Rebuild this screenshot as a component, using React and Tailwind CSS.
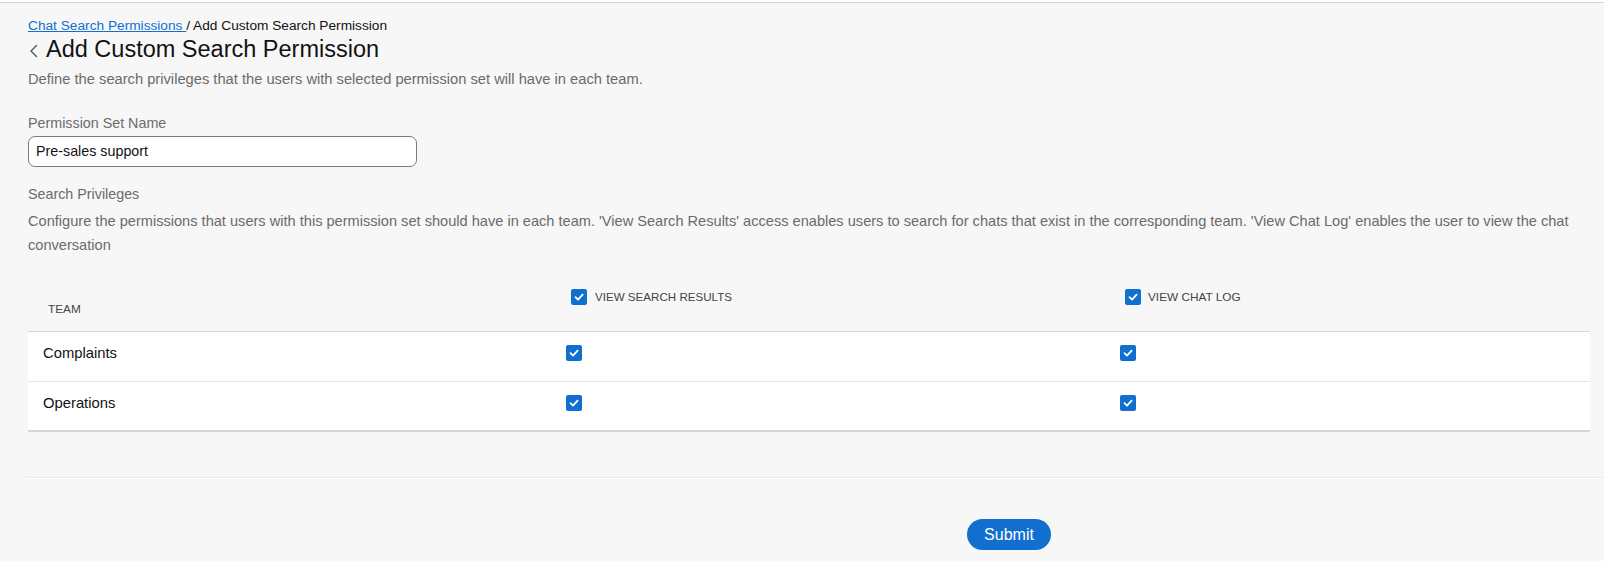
import React from "react";

function Check({ className = "" }) {
  return (
    <span className={`inline-flex h-[16px] w-[16px] shrink-0 items-center justify-center rounded-[2px] bg-[#1170cf] ${className}`}>
      <svg width="12" height="12" viewBox="0 0 12 12" fill="none">
        <path d="M2.5 6.2 L5 8.6 L9.6 3.6" stroke="white" strokeWidth="1.8" strokeLinecap="round" strokeLinejoin="round" />
      </svg>
    </span>
  );
}

export default function App() {
  const rows = ["Complaints", "Operations"];
  return (
    <div className="min-h-screen bg-[#f7f7f7] font-['Liberation_Sans',Arial,sans-serif] text-[#121212]">
      <div className="h-[2px] bg-white" />
      <div className="h-px bg-[#d4d4d4]" />
      <div className="px-[28px]">
        <div className="pt-[15px] text-[13.7px] leading-[16px]">
          <a className="text-[#1170cf] underline" href="#">Chat Search Permissions </a>
          <span className="text-[#121212]">/ Add Custom Search Permission</span>
        </div>
        <div className="mt-[2px] flex items-center gap-[7px]">
          <svg width="11" height="16" viewBox="0 0 11 16" className="mt-[3px]">
            <path d="M8.5 2.5 L3 8 L8.5 13.5" stroke="#555" strokeWidth="1.4" fill="none" strokeLinecap="round" strokeLinejoin="round" />
          </svg>
          <h1 className="text-[23.5px] leading-[27px] font-normal">Add Custom Search Permission</h1>
        </div>
        <p className="mt-[8px] text-[14.7px] leading-[16px] text-[#6b6b6b]">
          Define the search privileges that the users with selected permission set will have in each team.
        </p>
        <div className="mt-[28px] text-[14.3px] leading-[16px] text-[#6b6b6b]">Permission Set Name</div>
        <div className="mt-[5px] flex h-[31px] w-[389px] items-center rounded-[7px] border border-[#7a7a7a] bg-white px-[7px] text-[14.3px] text-[#121212]">
          Pre-sales support
        </div>
        <div className="mt-[19px] text-[14.3px] leading-[16px] text-[#6b6b6b]">Search Privileges</div>
        <p className="mt-[7px] text-[14.6px] leading-[24px] text-[#6b6b6b]">
          Configure the permissions that users with this permission set should have in each team. 'View Search Results' access enables users to search for chats that exist in the corresponding team. 'View Chat Log' enables the user to view the chat conversation
        </p>

        <div className="mr-[-14px] mt-[24px]">
          <div className="grid h-[51px] grid-cols-[523px_554px_1fr] border-b border-[#d6d6d6]">
            <div className="flex items-end pb-[15px] pl-[20px] text-[11.8px] leading-[13px] text-[#444]">TEAM</div>
            <div className="flex items-start gap-[8px] pl-[20px] pt-[8px] text-[11.6px] leading-[16px] text-[#444]">
              <Check />
              <span>VIEW SEARCH RESULTS</span>
            </div>
            <div className="flex items-start gap-[7px] pl-[20px] pt-[8px] text-[11.8px] leading-[16px] text-[#444]">
              <Check />
              <span>VIEW CHAT LOG</span>
            </div>
          </div>
          {rows.map((r, i) => (
            <div
              key={r}
              className={`grid h-[50px] grid-cols-[523px_554px_1fr] items-start pt-[13px] bg-white ${i === rows.length - 1 ? "border-b-2 border-[#d6d6d6]" : "border-b border-[#e6e6e6]"}`}
            >
              <div className="pl-[15px] text-[14.8px] leading-[16px] text-[#121212]">{r}</div>
              <div className="flex pl-[15px]"><Check /></div>
              <div className="flex pl-[15px]"><Check /></div>
            </div>
          ))}
        </div>
      </div>
      <div className="ml-[25px] mt-[45px] h-px bg-[#ebebeb]" />
      <div className="ml-[25px] h-px bg-white" />
      <div className="mt-[40px] flex pl-[967px]">
        <button className="h-[31px] w-[84px] rounded-full bg-[#1170cf] text-[16px] text-white">Submit</button>
      </div>
    </div>
  );
}
